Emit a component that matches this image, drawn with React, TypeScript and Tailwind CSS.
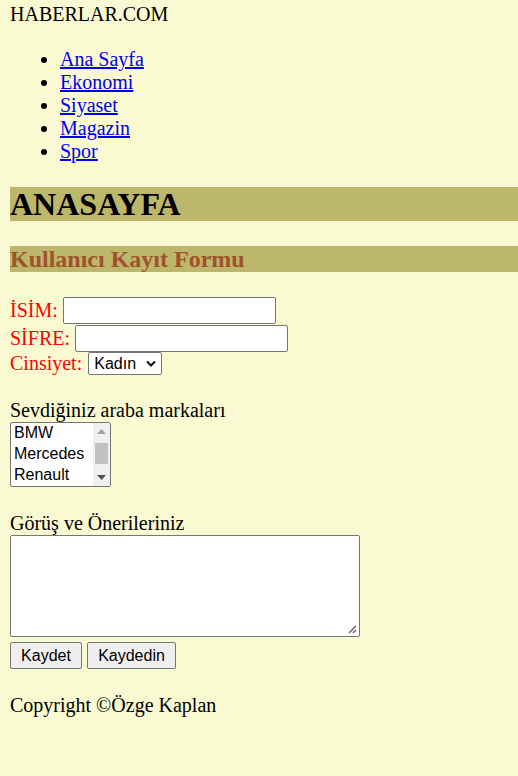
import React from "react";

export default function App() {
  const links = ["Ana Sayfa", "Ekonomi", "Siyaset", "Magazin", "Spor"];
  const cars = ["BMW", "Mercedes", "Renault"];

  return (
    <div className="min-h-screen bg-[#fafad2] pl-[10px] pt-[3px] pb-10 font-['Liberation_Serif',serif] text-black">
      {/* ust baslik */}
      <div className="text-[20px] leading-[23px]">HABERLAR.COM</div>

      <ul className="mt-[22px] list-disc pl-[50px] text-[20px] leading-[23px]">
        {links.map((l) => (
          <li key={l}>
            <a href="#" className="text-[#0000ee] underline">
              {l}
            </a>
          </li>
        ))}
      </ul>

      <h1 className="mt-[24px] h-[34px] bg-[#bdb76b] text-[32px] font-bold leading-[34px]">
        ANASAYFA
      </h1>
      <h2 className="mt-[25px] h-[26px] bg-[#bdb76b] text-[24px] font-bold leading-[27px] text-[#a0522d]">
        Kullanıcı Kayıt Formu
      </h2>

      {/* form */}
      <form className="mt-6 text-[20px] leading-[23px]">
        <div className="flex h-[28px] items-center gap-[5px]">
          <span className="text-[#ff0000]">İSİM:</span>
          <input
            type="text"
            className="h-[27px] w-[213px] rounded-[2px] border border-[#767676] bg-white"
          />
        </div>
        <div className="flex h-[28px] items-center gap-[5px]">
          <span className="text-[#ff0000]">SİFRE:</span>
          <input
            type="password"
            className="h-[27px] w-[213px] rounded-[2px] border border-[#767676] bg-white"
          />
        </div>
        <div className="flex h-[23px] items-center gap-[6px]">
          <span className="text-[#ff0000]">Cinsiyet:</span>
          <div className="flex h-[23px] w-[74px] items-center justify-between rounded-[2px] border border-[#767676] bg-white pl-[5px] pr-[5px] font-['Liberation_Sans',sans-serif] text-base leading-[18px]">
            <span>Kadın</span>
            <svg width="10" height="7" viewBox="0 0 10 7">
              <polyline points="1,1.5 5,5.5 9,1.5" fill="none" stroke="#111" strokeWidth="2" />
            </svg>
          </div>
        </div>

        <div className="mt-[24px]">Sevdiğiniz araba markaları</div>
        <div className="flex h-[65px] w-[101px] overflow-hidden rounded-[2px] border border-[#767676] bg-white font-['Liberation_Sans',sans-serif] text-base leading-[21px]">
          <div className="-mt-px flex-1 pl-[3px]">
            {cars.map((c) => (
              <div key={c}>{c}</div>
            ))}
          </div>
          <div className="flex w-[17px] flex-col bg-[#f0f0f0]">
            <div className="flex h-[17px] items-center justify-center">
              <svg width="9" height="5" viewBox="0 0 9 5">
                <polygon points="0,5 4.5,0 9,5" fill="#a3a3a3" />
              </svg>
            </div>
            <div className="mx-[2px] mt-[3px] h-[21px] bg-[#c1c1c1]" />
            <div className="mt-auto flex h-[17px] items-center justify-center">
              <svg width="9" height="5" viewBox="0 0 9 5">
                <polygon points="0,0 4.5,5 9,0" fill="#505050" />
              </svg>
            </div>
          </div>
        </div>

        <div className="mt-[25px]">Görüş ve Önerileriniz</div>
        <div className="relative h-[102px] w-[350px] rounded-[2px] border border-[#767676] bg-white">
          <svg className="absolute bottom-[2px] right-[2px]" width="10" height="10" viewBox="0 0 10 10">
            <line x1="9" y1="2" x2="2" y2="9" stroke="#555" strokeWidth="1.2" />
            <line x1="9" y1="6" x2="6" y2="9" stroke="#555" strokeWidth="1.2" />
          </svg>
        </div>

        <div className="mt-[5px] flex gap-[5px] font-['Liberation_Sans',sans-serif] text-base">
          <button
            type="button"
            className="h-[27px] w-[72px] rounded-[2px] border border-[#767676] bg-[#efefef] text-center leading-[18px]"
          >
            Kaydet
          </button>
          <button
            type="button"
            className="h-[27px] w-[89px] rounded-[2px] border border-[#767676] bg-[#efefef] text-center leading-[18px]"
          >
            Kaydedin
          </button>
        </div>
      </form>

      <div className="mt-[25px] text-[20px] leading-[23px]">Copyright ©Özge Kaplan</div>
    </div>
  );
}
